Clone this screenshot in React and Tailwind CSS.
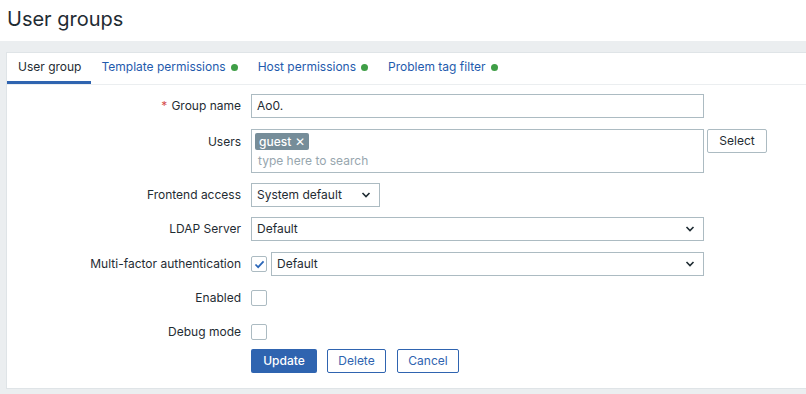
import React from "react";

const font = { fontFamily: "Inter, 'Noto Sans', sans-serif" };

function Chevron() {
  return (
    <svg width="10" height="6" viewBox="0 0 10 6" className="shrink-0">
      <path d="M1.5 1 L5 4.5 L8.5 1" fill="none" stroke="#1f2c33" strokeWidth="1.6" />
    </svg>
  );
}

function Select({ value, className }) {
  return (
    <div
      className={
        "h-[24px] border border-[#acbbc2] bg-white flex items-center justify-between pl-[5px] pr-[8px] text-[12px] text-[#1f2c33] " +
        className
      }
    >
      <span>{value}</span>
      <Chevron />
    </div>
  );
}

function Checkbox({ checked }) {
  return (
    <div className="w-[16px] h-[16px] border border-[#acbbc2] rounded-[2px] bg-white flex items-center justify-center shrink-0">
      {checked && (
        <svg width="11" height="9" viewBox="0 0 12 10">
          <path d="M1.5 5 L4.5 8 L10.5 1.5" fill="none" stroke="#2a66b8" strokeWidth="1.9" />
        </svg>
      )}
    </div>
  );
}

function Row({ label, required, children, className = "", top = false }) {
  return (
    <div className={"flex " + (top ? "items-start " : "items-center ") + className}>
      <div
        className={
          "w-[244px] shrink-0 text-right pr-[10px] text-[12px] text-[#1f2c33] " +
          (top ? "pt-[4px]" : "")
        }
      >
        {required && <span className="text-[#d64e4e] mr-[4px]">*</span>}
        {label}
      </div>
      {children}
    </div>
  );
}

function Tab({ label, active, dot }) {
  return (
    <div
      className={
        "h-full flex items-center px-[10px] text-[12px] border-b-[3px] " +
        (active ? "border-[#2f64b0] text-[#1f2c33] pl-[11px]" : "border-transparent text-[#1f5bad]")
      }
    >
      {label}
      {dot && <span className="ml-[5px] w-[7px] h-[7px] rounded-full bg-[#3f9e46] inline-block" />}
    </div>
  );
}

export default function App() {
  return (
    <div className="w-[806px] h-[394px] bg-[#ebeef0] overflow-hidden" style={font}>
      <header className="h-[41px] bg-white flex items-center pl-[7px]">
        <h1 className="text-[20px] text-[#1f2c33] leading-none pb-[3px]">User groups</h1>
      </header>

      <div className="mt-[11px] ml-[6px] w-[820px] bg-white border border-[#dfe4e7]">
        <nav className="h-[32px] flex border-b border-[#ebeef0]">
          <Tab label="User group" active />
          <Tab label="Template permissions" dot />
          <Tab label="Host permissions" dot />
          <Tab label="Problem tag filter" dot />
        </nav>

        <div className="pt-[9px] pb-[15px] flex flex-col">
          <Row label="Group name" required>
            <div className="w-[453px] h-[24px] border border-[#acbbc2] flex items-center px-[5px] text-[12px] text-[#1f2c33]">
              Ao0.
            </div>
          </Row>

          <Row label="Users" top className="mt-[11px]">
            <div className="w-[453px] h-[44px] border border-[#acbbc2] px-[3px] pt-[3px] flex flex-col">
              <span className="self-start h-[17px] px-[4px] rounded-[2px] bg-[#768d99] text-white text-[12px] font-medium leading-[17px] flex items-center gap-[4px]">
                guest
                <span className="text-[12px]">✕</span>
              </span>
              <span className="text-[12px] text-[#97a6ae] mt-[2px] pl-[3px]">type here to search</span>
            </div>
            <button className="ml-[3px] w-[60px] h-[24px] border border-[#acbbc2] rounded-[2px] bg-white text-[12px] text-[#1f2c33]">
              Select
            </button>
          </Row>

          <Row label="Frontend access" className="mt-[10px]">
            <Select value="System default" className="w-[129px]" />
          </Row>

          <Row label="LDAP Server" className="mt-[10px]">
            <Select value="Default" className="w-[453px]" />
          </Row>

          <Row label="Multi-factor authentication" className="mt-[11px]">
            <div className="flex items-center">
              <Checkbox checked />
              <Select value="Default" className="ml-[4px] w-[433px]" />
            </div>
          </Row>

          <Row label="Enabled" className="mt-[10px] h-[24px]">
            <Checkbox />
          </Row>

          <Row label="Debug mode" className="mt-[10px] h-[24px]">
            <Checkbox />
          </Row>

          <Row label="" className="mt-[5px]">
            <div className="flex gap-[10px]">
              <button className="h-[24px] w-[66px] rounded-[2px] bg-[#2f64b0] text-white text-[12px] font-medium">
                Update
              </button>
              <button className="h-[24px] w-[59px] rounded-[2px] border border-[#2f64b0] bg-white text-[#2f64b0] text-[12px]">
                Delete
              </button>
              <button className="ml-[1px] h-[24px] w-[62px] rounded-[2px] border border-[#2f64b0] bg-white text-[#2f64b0] text-[12px]">
                Cancel
              </button>
            </div>
          </Row>
        </div>
      </div>
    </div>
  );
}
